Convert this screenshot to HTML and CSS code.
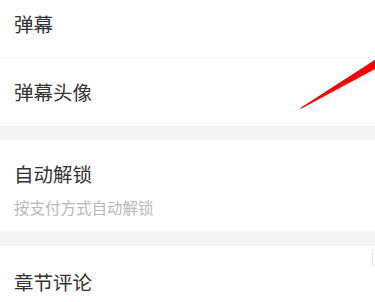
FILE: index.html
```html
<!DOCTYPE html>
<html lang="zh-CN">
<head>
<meta charset="utf-8">
<title>设置</title>
<link rel="stylesheet" href="styles.css">
</head>
<body>
<div class="page">
  <div class="row row-first">
    <div class="title">弹幕</div>
  </div>
  <div class="row row-second">
    <div class="title">弹幕头像</div>
  </div>
  <div class="band"></div>
  <div class="row row-unlock">
    <div class="title">自动解锁</div>
    <div class="sub">按支付方式自动解锁</div>
  </div>
  <div class="band band-2"></div>
  <div class="row row-comment">
    <div class="title">章节评论</div>
    <div class="edge-mark"></div>
  </div>
  <svg class="annot" width="375" height="302" viewBox="0 0 375 302">
    <polygon points="299.5,108.5 301.5,108.5 376,68.5 376,59" fill="#ff0000"/>
  </svg>
</div>
</body>
</html>
```

FILE: styles.css
```css
html, body {
  margin: 0;
  padding: 0;
  background: #ffffff;
}
body {
  font-family: "Noto Sans CJK SC", "Noto Sans", sans-serif;
  width: 375px;
  height: 302px;
  overflow: hidden;
}
.page {
  position: relative;
  width: 375px;
  height: 302px;
  overflow: hidden;
  display: flex;
  flex-direction: column;
}
.row {
  background: #ffffff;
  padding: 0 14px;
  display: flex;
  flex-direction: column;
  flex-shrink: 0;
  position: relative;
}
.title {
  font-size: 19.5px;
  line-height: 20px;
  color: #333333;
  white-space: nowrap;
}
.sub {
  font-size: 15.5px;
  line-height: 18px;
  color: #b8b8b8;
  margin-top: 14px;
  white-space: nowrap;
}
.row-first {
  padding-top: 14px;
  padding-bottom: 23px;
  border-bottom: 1px solid #f6f6f6;
}
.row-second {
  padding-top: 24px;
  padding-bottom: 24px;
}
.band {
  height: 14px;
  background: #f4f4f4;
  flex-shrink: 0;
}
.band-2 {
  height: 15px;
}
.row-unlock {
  padding-top: 24px;
  padding-bottom: 15px;
}
.row-comment {
  padding-top: 26px;
  padding-bottom: 20px;
}
.edge-mark {
  position: absolute;
  left: 372px;
  top: 3px;
  width: 12px;
  height: 16px;
  border: 1px solid #e4e4e4;
  border-radius: 3px;
}
.annot {
  position: absolute;
  left: 0;
  top: 0;
  pointer-events: none;
}
```
